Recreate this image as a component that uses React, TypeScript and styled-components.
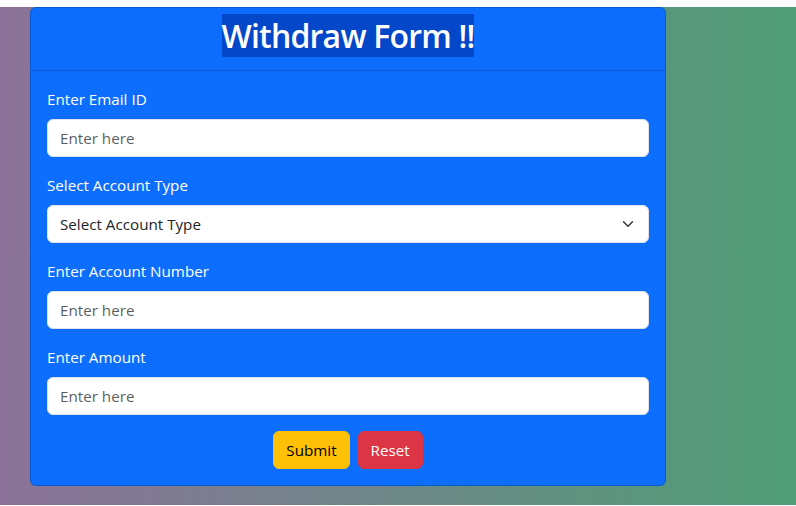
import React, { FC, useState } from 'react';
import styled, { createGlobalStyle } from 'styled-components';

const GlobalStyle = createGlobalStyle`
  html, body {
    margin: 0;
    padding: 0;
    background: #fff;
  }
  body {
    font-family: "Open Sans", "Noto Sans", Arial, sans-serif;
    font-size: 16px;
    line-height: 1.5;
    color: #212529;
  }
  * { box-sizing: border-box; }
`;

const Page = styled.div`
  margin-top: 8px;
  min-height: 498px;
  padding-left: 30px;
  background: linear-gradient(to right, #8c7299, #4f9e76);
`;

const Card = styled.div`
  width: 636px;
  margin-top: -1px;
  background: #0d6efd;
  border: 1px solid rgba(0, 0, 0, 0.175);
  border-radius: 6px;
  color: #fff;
`;

const CardHeader = styled.div`
  padding: 9px 16px 7px;
  border-bottom: 1px solid rgba(0, 0, 0, 0.175);
  text-align: center;
`;

const Title = styled.h2`
  margin: 0 0 8px;
  font-size: 32px;
  font-weight: 600;
  line-height: 1.2;
  letter-spacing: -0.8px;
`;

const Highlight = styled.span`
  background: #0447c9;
`;

const CardBody = styled.form`
  padding: 16px;
`;

const Field = styled.div`
  margin-bottom: 16px;
`;

const Label = styled.label`
  display: block;
  margin-bottom: 8px;
  font-size: 15.2px;
  line-height: 24px;
`;

const Input = styled.input`
  display: block;
  width: 100%;
  height: 38px;
  padding: 6px 12px;
  font-family: inherit;
  font-size: 15.2px;
  color: #212529;
  background: #fff;
  border: 1px solid #dee2e6;
  border-radius: 6px;
  outline: none;
  &::placeholder {
    color: rgba(33, 37, 41, 0.75);
  }
`;

const Select = styled.select`
  display: block;
  width: 100%;
  height: 38px;
  padding: 6px 36px 6px 12px;
  font-family: inherit;
  font-size: 15.2px;
  color: #212529;
  background-color: #fff;
  background-image: url("data:image/svg+xml,%3csvg xmlns='http://www.w3.org/2000/svg' viewBox='0 0 16 16'%3e%3cpath fill='none' stroke='%23343a40' stroke-linecap='round' stroke-linejoin='round' stroke-width='2' d='m2 5 6 6 6-6'/%3e%3c/svg%3e");
  background-repeat: no-repeat;
  background-position: right 12px center;
  background-size: 16px 12px;
  border: 1px solid #dee2e6;
  border-radius: 6px;
  appearance: none;
  outline: none;
`;

const Actions = styled.div`
  display: flex;
  justify-content: center;
  gap: 8px;
`;

const Button = styled.button<{ $variant: 'warning' | 'danger' }>`
  height: 38px;
  padding: 6px 12px;
  font-family: inherit;
  font-size: 15.2px;
  line-height: 24px;
  border: 1px solid ${p => (p.$variant === 'warning' ? '#ffc107' : '#dc3545')};
  border-radius: 6px;
  background: ${p => (p.$variant === 'warning' ? '#ffc107' : '#dc3545')};
  color: ${p => (p.$variant === 'warning' ? '#000' : '#fff')};
  cursor: pointer;
`;

const fields = [
  { id: 'email', label: 'Enter Email ID' },
  { id: 'type', label: 'Select Account Type', select: true },
  { id: 'account', label: 'Enter Account Number' },
  { id: 'amount', label: 'Enter Amount' },
];

const App: FC = () => {
  const [type, setType] = useState('');
  return (
    <>
      <GlobalStyle />
      <Page>
        <Card>
          <CardHeader>
            <Title><Highlight>Withdraw Form !!</Highlight></Title>
          </CardHeader>
          <CardBody onSubmit={e => e.preventDefault()}>
            {fields.map(f => (
              <Field key={f.id}>
                <Label htmlFor={f.id}>{f.label}</Label>
                {f.select ? (
                  <Select id={f.id} value={type} onChange={e => setType(e.target.value)}>
                    <option value="">Select Account Type</option>
                    <option value="savings">Savings</option>
                    <option value="current">Current</option>
                  </Select>
                ) : (
                  <Input id={f.id} placeholder="Enter here" />
                )}
              </Field>
            ))}
            <Actions>
              <Button type="submit" $variant="warning">Submit</Button>
              <Button type="reset" $variant="danger">Reset</Button>
            </Actions>
          </CardBody>
        </Card>
      </Page>
    </>
  );
};

export default App;
